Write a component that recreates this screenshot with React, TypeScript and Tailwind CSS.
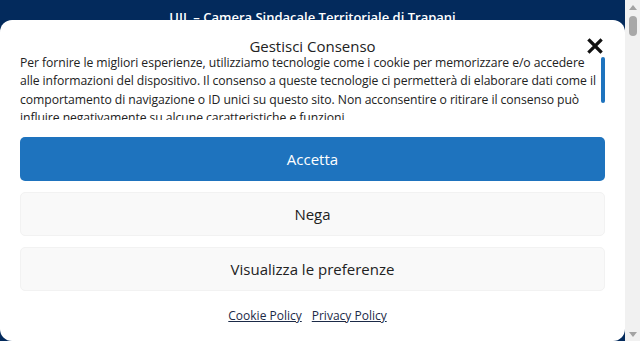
import React from 'react';

const font = { fontFamily: '"Open Sans", "Noto Sans", sans-serif' };

function CloseIcon() {
  return (
    <svg width="16" height="16" viewBox="0 0 16 16" fill="none">
      <path d="M2.5 2.5 L13.5 13.5 M13.5 2.5 L2.5 13.5" stroke="#111" strokeWidth="3.2" strokeLinecap="square" />
    </svg>
  );
}

function PageScrollbar() {
  return (
    <div className="flex w-[15px] shrink-0 flex-col items-center bg-[#f1f1f1]">
      <div className="mt-[5px] h-0 w-0 border-x-[4px] border-b-[5px] border-x-transparent border-b-[#a3a3a3]" />
      <div className="mt-[6px] h-[20px] w-[8px] rounded-full bg-[#a8a8a8]" />
      <div className="flex-1" />
      <div className="mb-[4px] h-0 w-0 border-x-[4px] border-t-[5px] border-x-transparent border-t-[#a3a3a3]" />
    </div>
  );
}

export default function App() {
  return (
    <div className="flex h-[341px] w-[640px] overflow-hidden" style={font}>
      <div className="flex min-w-0 flex-1 flex-col bg-[#032a5c]">
        {/* site header, mostly hidden behind the banner */}
        <div className="h-[20px] overflow-hidden">
          <p className="pt-[8px] text-center text-[13px] font-semibold leading-[18px] text-white">
            UIL – Camera Sindacale Territoriale di Trapani
          </p>
        </div>

        {/* cookie banner */}
        <div className="flex flex-1 flex-col rounded-[12px] bg-white px-[20px] pt-[16px] text-[#222]">
          <div className="relative">
            <h2 className="text-center text-[15px] leading-[20px]">Gestisci Consenso</h2>
            <button className="absolute right-[2px] top-[2px]">
              <CloseIcon />
            </button>
          </div>

          <div className="mt-[-2px] flex h-[66px] gap-[4px]">
            <div className="min-w-0 flex-1 overflow-hidden whitespace-nowrap text-[12.2px] leading-[18.4px] tracking-[-0.07px]">
              Per fornire le migliori esperienze, utilizziamo tecnologie come i cookie per memorizzare e/o accedere
              <br />
              alle informazioni del dispositivo. Il consenso a queste tecnologie ci permetterà di elaborare dati come il
              <br />
              comportamento di navigazione o ID unici su questo sito. Non acconsentire o ritirare il consenso può
              <br />
              influire negativamente su alcune caratteristiche e funzioni.
            </div>
            <div className="w-[4px] shrink-0 pt-[3px]">
              <div className="h-[46px] w-[4px] rounded-full bg-[#1e73be]" />
            </div>
          </div>

          <div className="mt-[17px] flex flex-col gap-[11px]">
            <button className="h-[44px] rounded-[5px] bg-[#1e73be] text-[15px] text-white">Accetta</button>
            <button className="h-[44px] rounded-[5px] border border-[#f2f2f2] bg-[#f9f9f9] text-[15px] text-[#222]">
              Nega
            </button>
            <button className="h-[44px] rounded-[5px] border border-[#f2f2f2] bg-[#f9f9f9] text-[15px] text-[#222]">
              Visualizza le preferenze
            </button>
          </div>

          <div className="mt-[16px] flex justify-center gap-[10px] pr-[10px] text-[12px] leading-[17px] text-[#1b2a48]">
            <a className="underline" href="#">Cookie Policy</a>
            <a className="underline" href="#">Privacy Policy</a>
          </div>
        </div>
      </div>
      <PageScrollbar />
    </div>
  );
}
